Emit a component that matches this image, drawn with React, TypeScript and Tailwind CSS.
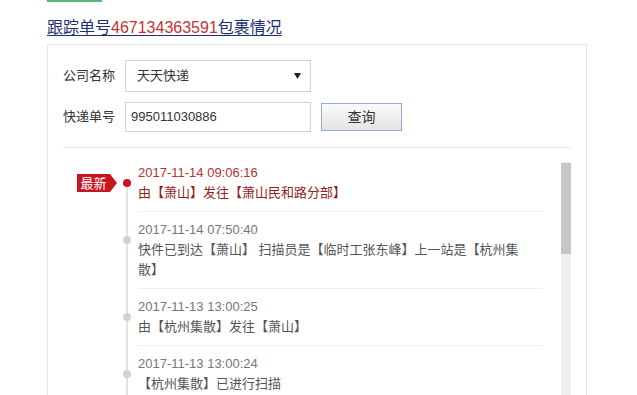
import React from "react";

type Step = {
  time: string;
  text: string;
  latest?: boolean;
};

const steps: Step[] = [
  { time: "2017-11-14 09:06:16", text: "由【萧山】发往【萧山民和路分部】", latest: true },
  { time: "2017-11-14 07:50:40", text: "快件已到达【萧山】 扫描员是【临时工张东峰】上一站是【杭州集散】" },
  { time: "2017-11-13 13:00:25", text: "由【杭州集散】发往【萧山】" },
  { time: "2017-11-13 13:00:24", text: "【杭州集散】已进行扫描" },
  { time: "2017-11-13 12:58:10", text: "快件已到达【杭州集散】" },
];

const font = { fontFamily: '"Liberation Sans", Arial, "Noto Sans CJK SC", sans-serif' };

export default function App() {
  return (
    <div className="h-[395px] overflow-hidden bg-white pl-[47px]" style={font}>
      {/* top accent */}
      <div className="h-[2px] w-[55px] bg-[#55b873]" />

      {/* Title */}
      <h1 className="mt-[16px] h-[20px] text-[16px] leading-[20px] font-normal text-[#1f2f72] underline underline-offset-[2px]">
        跟踪单号<span className="text-[#c8302f]">467134363591</span>包裹情况
      </h1>

      {/* Panel */}
      <div className="mt-[6px] w-[540px] border border-[#e6e6e6] px-[15px] pt-[15px]">
        {/* Query form */}
        <div className="flex flex-col gap-[10px] border-b border-[#ececec] pb-[15px] text-[13px] text-[#333]">
          <div className="flex items-center">
            <span className="w-[62px]">公司名称</span>
            <div className="flex h-[32px] w-[186px] items-center justify-between border border-[#d4d4d4] pl-[11px] pr-[9px]">
              <span>天天快递</span>
              <svg width="7" height="6" viewBox="0 0 7 6">
                <path d="M0 0 L7 0 L3.5 6 Z" fill="#222" />
              </svg>
            </div>
          </div>
          <div className="flex items-center">
            <span className="w-[62px]">快递单号</span>
            <div className="flex h-[30px] w-[186px] items-center border border-[#d4d4d4] pl-[5px]">
              995011030886
            </div>
            <button className="ml-[10px] h-[28px] w-[81px] border border-[#93acd6] bg-gradient-to-b from-[#fbfbfb] to-[#e4e4e4] text-[14px] text-[#333]">
              查询
            </button>
          </div>
        </div>

        {/* Tracking list */}
        <div className="mt-[14px] flex h-[260px]">
          <div className="relative flex-1">
            <div className="absolute left-[63px] top-[21px] bottom-0 w-[2px] bg-[#e2e2e2]" />
            {steps.map((s, i) => (
              <div key={i} className={`relative pl-[75px] ${i === 0 ? "pt-[1px]" : "pt-[8px]"}`}>
                {s.latest && (
                  <div className="absolute left-[14px] top-[12px] flex h-[18px] items-center">
                    <span className="flex h-[18px] w-[33px] items-center justify-center bg-[#c8161e] text-[13px] leading-none text-white">
                      最新
                    </span>
                    <span className="h-0 w-0 border-y-[9px] border-l-[7px] border-y-transparent border-l-[#c8161e]" />
                  </div>
                )}
                <span
                  className={`absolute left-[60px] h-[8px] w-[8px] rounded-full ${
                    s.latest ? "top-[17px] bg-[#c8161e]" : "top-[24px] bg-[#d2d2d2]"
                  }`}
                />
                <div className="mr-[18px] border-b border-[#efefef] pb-[8px] text-[13px] leading-[20px]">
                  <div className={s.latest ? "text-[#b8312f]" : "text-[#777]"}>{s.time}</div>
                  <div className={`w-[390px] ${s.latest ? "text-[#921e1e]" : "text-[#555]"}`}>{s.text}</div>
                </div>
              </div>
            ))}
          </div>
          {/* scrollbar */}
          <div className="w-[10px] bg-[#f0f0f0] pt-[1px]">
            <div className="h-[91px] bg-[#c6c6c6]" />
          </div>
        </div>
      </div>
    </div>
  );
}
